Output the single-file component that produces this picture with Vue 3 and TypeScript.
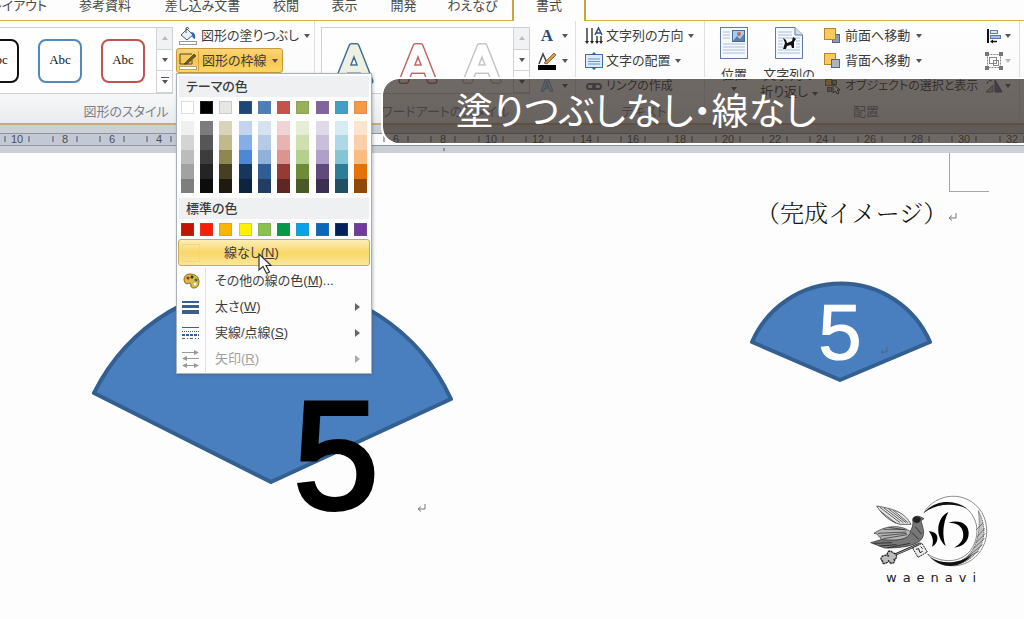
<script setup lang="ts">
interface Shade { base: string; ramp: string[] }

const tabs: string[] = ['レイアウト', '参考資料', '差し込み文書', '校閲', '表示', '開発', 'わえなび', '書式']
const shapeStyles: string[] = ['black', 'blue', 'red']
const artStyles: string[] = ['teal', 'rose', 'silver']

const theme: Shade[] = [
  { base: '#ffffff', ramp: ['#f0f0f0', '#d4d4d4', '#bcbcbc', '#a2a2a2', '#7e7e7e'] },
  { base: '#000000', ramp: ['#7c7c7c', '#565656', '#3c3c3c', '#242424', '#0c0c0c'] },
  { base: '#e6e7e1', ramp: ['#d9d3bb', '#bfb98b', '#8f8650', '#463f22', '#1e1a10'] },
  { base: '#1d4679', ramp: ['#c2d4f0', '#86aee6', '#4c88d6', '#14365f', '#0d2342'] },
  { base: '#4c7fb8', ramp: ['#d8e2ee', '#b5cbe5', '#90b2d8', '#315e92', '#223f63'] },
  { base: '#c5534a', ramp: ['#f1d3d6', '#e8b4b2', '#dc9490', '#973a34', '#5e2723'] },
  { base: '#96b156', ramp: ['#e6ecd6', '#d0dfb0', '#b5cf8c', '#6f8b38', '#4a5a26'] },
  { base: '#8064a2', ramp: ['#e0d9e8', '#cabfda', '#b09fc8', '#5f4a7d', '#3c3052'] },
  { base: '#439fc4', ramp: ['#d6ebf2', '#aed8e6', '#84c4d6', '#2b7d98', '#205063'] },
  { base: '#f79a45', ramp: ['#fde4cd', '#fbcfaa', '#f9bd82', '#e57206', '#8f4a0a'] },
]
const standard: string[] = ['#c01405', '#fb1d05', '#fdb409', '#fdf104', '#8cc152', '#089748', '#08a2ea', '#0a68bc', '#02205e', '#6f3c9e']

const rulerMarks = Array.from({ length: 26 }, (_, i) => {
  const n = (i - 6) * 2
  return { n: Math.abs(n), x: Math.round(254 + n * 23.68) }
})
</script>

<template>
  <div class="window">
    <nav class="tabs" aria-label="リボン">
      <a v-for="(t, i) in tabs" :key="t" href="#" class="tab" :class="{ first: i === 0, active: t === '書式' }">{{ t }}</a>
      <span class="tab-rest"></span>
    </nav>

    <div class="ribbon">
      <section class="group g-shape">
        <div class="body">
          <div class="gallery shapes">
            <div class="thumbs">
              <button v-for="s in shapeStyles" :key="s" type="button" class="abc" :class="s">Abc</button>
            </div>
            <div class="scroll">
              <button type="button" aria-label="上へ"><i class="caret up"></i></button>
              <button type="button" aria-label="下へ"><i class="caret"></i></button>
              <button type="button" aria-label="その他"><i class="caret more"></i></button>
            </div>
          </div>
          <div class="commands">
            <button type="button" class="cmd">
              <svg width="20" height="20" viewBox="0 0 20 20">
                <path d="M3 9 L9 3 L15 9 L9 14 Z" fill="#e9f0fa" stroke="#3b5f93" />
                <path d="M8 7 V2 Q10 0 11 3" fill="none" stroke="#555" />
                <path d="M13 6 Q18 6 17 13 Q14 12 14 9 Z" fill="#2f68b4" />
                <rect x="1.500" y="15.500" width="17" height="3" fill="#fff" stroke="#999" />
              </svg>
              <span>図形の塗りつぶし</span><i class="caret"></i>
            </button>
            <div class="split">
              <button type="button" class="cmd pressed" aria-expanded="true">
                <svg width="20" height="20" viewBox="0 0 20 20">
                  <path d="M14 3 H2 V13 H14 V9" fill="none" stroke="#4d4634" />
                  <path d="M7 12 L16 3 L18 5 L9 13 L6 13 Z" fill="#6d5a2b" stroke="#3d341b" stroke-width=".6" />
                  <rect x="1.500" y="15.500" width="17" height="3" fill="#fff" stroke="#b9a676" />
                </svg>
                <span>図形の枠線</span><i class="caret"></i>
              </button>

              <div class="menu">
                <h3>テーマの色</h3>
                <div class="swatches">
                  <button v-for="c in theme" :key="c.base" type="button" class="sw" :aria-label="c.base" :style="{ background: c.base }"></button>
                </div>
                <div class="ramps">
                  <div v-for="c in theme" :key="c.base" class="ramp">
                    <button v-for="r in c.ramp" :key="r" type="button" :aria-label="r" :style="{ background: r }"></button>
                  </div>
                </div>
                <h3>標準の色</h3>
                <div class="swatches std">
                  <button v-for="c in standard" :key="c" type="button" class="sw" :aria-label="c" :style="{ background: c }"></button>
                </div>
                <button type="button" class="none"><i class="nobox"></i><span>線なし(<u>N</u>)</span></button>
                <div class="items">
                  <button type="button" class="item">
                    <svg width="20" height="20" viewBox="0 0 20 20">
                      <path d="M3 9 Q3 3 9 3 Q17 3 18 10 Q18 17 13 17 Q9 17 10 13 Q8 11 6 13 Q3 12 3 9 Z" fill="#d9b84a" stroke="#8a6b1c" />
                      <circle cx="7" cy="7" r="1.500" fill="#a03020" /><circle cx="11" cy="6" r="1.500" fill="#333" />
                      <circle cx="15" cy="9" r="1.500" fill="#33742a" /><circle cx="14" cy="13" r="1.500" fill="#fff" />
                    </svg>
                    <span>その他の線の色(<u>M</u>)...</span>
                  </button>
                  <button type="button" class="item">
                    <svg width="20" height="20" viewBox="0 0 20 20">
                      <path d="M1 5 H18" stroke="#3d5f8c" stroke-width="2" /><path d="M1 9.500 H18" stroke="#3d5f8c" stroke-width="3" /><path d="M1 15 H18" stroke="#3d5f8c" stroke-width="4" />
                    </svg>
                    <span>太さ(<u>W</u>)</span><i class="arrow"></i>
                  </button>
                  <button type="button" class="item">
                    <svg width="20" height="20" viewBox="0 0 20 20" stroke="#3d5f8c">
                      <path d="M1 4.500 H18" /><path d="M1 8.500 H18" stroke-dasharray="1 1" /><path d="M1 12 H18" stroke-width="2" stroke-dasharray="3 1" /><path d="M1 15.500 H18" stroke-dasharray="3 2 1 2" />
                    </svg>
                    <span>実線/点線(<u>S</u>)</span><i class="arrow"></i>
                  </button>
                  <button type="button" class="item" disabled>
                    <svg width="20" height="20" viewBox="0 0 20 20" stroke="#999" fill="#999">
                      <path d="M1 3.500 H15" /><path d="M13 1 L18 3.500 L13 6 Z" stroke="none" />
                      <path d="M4 9.500 H18" /><path d="M6 7 L1 9.500 L6 12 Z" stroke="none" />
                      <path d="M4 16.500 H15" /><path d="M13 14 L18 16.500 L13 19 Z M6 14 L1 16.500 L6 19 Z" stroke="none" />
                    </svg>
                    <span>矢印(<u>R</u>)</span><i class="arrow"></i>
                  </button>
                </div>
                <svg class="pointer" width="16" height="22" viewBox="0 0 16 22">
                  <path d="M1 1 V17 L5 13.500 L8.500 20.500 L11.500 19 L8 12.500 H13 Z" fill="#fff" stroke="#333" stroke-width="1.200" />
                </svg>
              </div>
            </div>
          </div>
        </div>
        <h2>図形のスタイル</h2>
      </section>

      <section class="group g-art">
        <div class="body">
          <div class="gallery arts">
            <div class="thumbs">
              <button v-for="s in artStyles" :key="s" type="button" class="art" :class="s" aria-label="ワードアート">
                <svg width="44" height="54" viewBox="0 0 44 54">
                  <text class="outer" x="22" y="47" text-anchor="middle">A</text>
                  <text class="inner" x="22" y="47" text-anchor="middle">A</text>
                </svg>
              </button>
            </div>
            <div class="scroll">
              <button type="button" aria-label="上へ"><i class="caret up"></i></button>
              <button type="button" aria-label="下へ"><i class="caret"></i></button>
              <button type="button" aria-label="その他"><i class="caret more"></i></button>
            </div>
          </div>
          <div class="commands">
            <button type="button" class="cmd"><b class="serif-a">A</b><i class="caret"></i></button>
            <button type="button" class="cmd">
              <svg width="20" height="20" viewBox="0 0 20 20">
                <path d="M2 13 L6 3 L10 12" fill="none" stroke="#444" stroke-width="1.500" />
                <path d="M7 12 L17 2 L19 4 L10 13 Z" fill="#d79a4c" stroke="#6f4a1c" stroke-width=".7" />
                <rect x="1" y="14" width="18" height="5" fill="#000" />
              </svg><i class="caret"></i>
            </button>
            <button type="button" class="cmd"><b class="glow-a">A</b><i class="caret"></i></button>
          </div>
        </div>
        <h2>ワードアートのスタイル</h2>
      </section>

      <section class="group g-text">
        <div class="commands">
          <button type="button" class="cmd">
            <svg width="20" height="20" viewBox="0 0 20 20">
              <path d="M3 2 V16 M8 2 V16 M13 10 V16 M17 10 V16" stroke="#222" stroke-width="1.300" />
              <path d="M1 15 H5 L3 18 Z M6 15 H10 L8 18 Z M11 15 H15 L13 18 Z M15 15 H19 L17 18 Z" fill="#222" />
              <path d="M11 9 L14.500 2 L18 9 M12.500 7 H17" fill="none" stroke="#2c4a85" stroke-width="1.500" />
            </svg>
            <span>文字列の方向</span><i class="caret"></i>
          </button>
          <button type="button" class="cmd">
            <svg width="20" height="20" viewBox="0 0 20 20">
              <rect x="1.500" y="3.500" width="17" height="13" fill="#dceafa" stroke="#3f6ea8" />
              <path d="M4 8 H16 M4 10.500 H16 M4 13 H16" stroke="#6d96c8" />
              <path d="M7 4 L10 1 L13 4 Z M7 16 L10 19 L13 16 Z" fill="#2d65a5" />
            </svg>
            <span>文字の配置</span><i class="caret"></i>
          </button>
          <button type="button" class="cmd compact">
            <svg width="20" height="20" viewBox="0 0 20 20" fill="none" stroke="#666a8a" stroke-width="2">
              <rect x="3" y="8" width="8" height="5" rx="2.500" /><rect x="9" y="8" width="8" height="5" rx="2.500" />
            </svg>
            <span>リンクの作成</span>
          </button>
        </div>
        <h2>テキスト</h2>
      </section>

      <section class="group g-arrange">
        <div class="body">
          <button type="button" class="big">
            <svg width="30" height="34" viewBox="0 0 30 34">
              <rect x="1.500" y="1.500" width="27" height="31" fill="#f5f9fe" stroke="#5d7ba3" />
              <path d="M4 6 H11 M4 9 H11 M4 12 H11 M4 18 H26 M4 21 H26 M4 24 H26 M4 27 H26" stroke="#a9bfdb" />
              <rect x="13.500" y="4.500" width="12" height="11" fill="#a9cbed" stroke="#4c6b97" />
              <path d="M14 15 L18 10 L21 13 L25 8 V15 Z" fill="#5a7fa8" /><circle cx="20" cy="8" r="2" fill="#c66a4e" />
            </svg>
            <span>位置</span><i class="caret"></i>
          </button>
          <button type="button" class="big wrap">
            <svg width="30" height="34" viewBox="0 0 30 34">
              <path d="M1.500 1.500 H21 L28.500 9 V32.500 H1.500 Z" fill="#f5f9fe" stroke="#5d7ba3" />
              <path d="M21 1.500 V9 H28.500" fill="#cfe0f3" stroke="#5d7ba3" />
              <path d="M4 6 H18 M4 9 H18 M4 12 H26 M4 15 H9 M22 15 H26 M4 18 H9 M22 18 H26 M4 21 H9 M22 21 H26 M4 24 H26 M4 27 H26" stroke="#a9bfdb" />
              <path d="M9 12 L12 14 L13 17 L18 15 L19 11 L22 13 L20 16 L20 22 H18 L17 19 L13 20 L12 23 H9 L11 17 Z" fill="#111" />
            </svg>
            <span>文字列の</span><span>折り返し <i class="caret"></i></span>
          </button>
          <div class="commands">
            <button type="button" class="cmd">
              <svg width="20" height="20" viewBox="0 0 20 20">
                <rect x="9.500" y="8.500" width="7" height="8" fill="#8d9db2" stroke="#55657c" /><rect x="1.500" y="2.500" width="11" height="11" fill="#fbc85c" stroke="#b98428" />
              </svg>
              <span>前面へ移動</span><i class="caret"></i>
            </button>
            <button type="button" class="cmd">
              <svg width="20" height="20" viewBox="0 0 20 20">
                <rect x="1.500" y="2.500" width="11" height="11" fill="#fbc85c" stroke="#b98428" /><rect x="8.500" y="8.500" width="8" height="8" fill="#a9b5c6" stroke="#55657c" />
              </svg>
              <span>背面へ移動</span><i class="caret"></i>
            </button>
            <button type="button" class="cmd compact">
              <svg width="20" height="20" viewBox="0 0 20 20">
                <rect x="2.500" y="3.500" width="6" height="6" fill="#fbc85c" stroke="#8a6a34" /><rect x="9.500" y="4.500" width="4" height="4" fill="#aaa" stroke="#666" /><rect x="4.500" y="11.500" width="4" height="4" fill="#aaa" stroke="#666" />
                <path d="M10 8 V17 L12.500 15 L14 18 L16 17 L14.500 14 H17 Z" fill="#fff" stroke="#333" />
              </svg>
              <span>オブジェクトの選択と表示</span>
            </button>
          </div>
          <div class="commands right">
            <button type="button" class="cmd" aria-label="配置">
              <svg width="20" height="20" viewBox="0 0 20 20">
                <path d="M4 3 V17" stroke="#111" stroke-width="2" /><rect x="6.500" y="4.500" width="7" height="3" fill="#dbe7f5" stroke="#5d7ba3" /><rect x="6.500" y="9.500" width="10" height="3" fill="#a8c0de" stroke="#5d7ba3" />
                <path d="M13 15.500 H8" stroke="#111" stroke-width="1.500" /><path d="M9 13.500 L6 15.500 L9 17.500 Z" fill="#111" />
              </svg><i class="caret"></i>
            </button>
            <button type="button" class="cmd" aria-label="グループ化" disabled>
              <svg width="20" height="20" viewBox="0 0 20 20" fill="none" stroke="#888">
                <rect x="3.500" y="3.500" width="13" height="13" stroke-dasharray="2 1" /><rect x="5.500" y="6.500" width="7" height="6" /><rect x="9.500" y="9.500" width="5" height="5" />
                <path d="M1 1 H5 V5 H1 Z M15 1 H19 V5 H15 Z M1 15 H5 V19 H1 Z M15 15 H19 V19 H15 Z" fill="#777" stroke="none" />
              </svg><i class="caret"></i>
            </button>
            <button type="button" class="cmd" aria-label="回転">
              <svg width="20" height="20" viewBox="0 0 20 20">
                <path d="M2 16 H9 V9 Z" fill="#b4b4c0" stroke="#777" /><path d="M11 4 V16 H18 Z" fill="#7b6aa8" stroke="#5b4c86" /><path d="M3 8 Q4 3 8 5" fill="none" stroke="#555" />
              </svg><i class="caret"></i>
            </button>
          </div>
        </div>
        <h2>配置</h2>
      </section>
    </div>

    <div class="ruler">
      <svg width="1240" height="28" viewBox="0 0 1240 28">
        <rect x="0" y="8" width="254" height="12" fill="#c2c8d6" />
        <rect x="254" y="8" width="986" height="12" fill="#fbfbfc" />
        <path d="M0 8.500 H1240" stroke="#8e949e" /><path d="M0 20.500 H1240" stroke="#8e949e" />
        <g v-for="m in rulerMarks" :key="m.x">
          <text v-if="m.n" :x="m.x" y="18" text-anchor="middle">{{ m.n }}</text>
          <path :d="`M${m.x - 12} 11 V17 M${m.x + 12} 11 V17`" stroke="#555" />
        </g>
        <path d="M444 23 V26" stroke="#555" />
      </svg>
    </div>

    <main class="page">
      <svg class="return r1" width="9" height="9" viewBox="0 0 9 9"><path d="M8 0 V5 H2 M4 2.500 L1 5 L4 7.500" fill="none" stroke="#777" /></svg>
      <svg class="return r2" width="9" height="9" viewBox="0 0 9 9"><path d="M8 0 V5 H2 M4 2.500 L1 5 L4 7.500" fill="none" stroke="#777" /></svg>
      <i class="corner"></i>
      <p class="caption">（完成イメージ）</p>

      <svg class="fan large" width="380" height="250" viewBox="0 0 380 250">
        <path d="M14 120 A198 198 0 0 1 371 126 L191 209 Z" fill="#4a7fbf" stroke="#335f91" stroke-width="4" stroke-linejoin="round" />
        <text x="256" y="236" text-anchor="middle" font-size="154" stroke="#000" stroke-width="4">5</text>
      </svg>
      <svg class="fan small" width="190" height="110" viewBox="0 0 190 110">
        <path d="M7 64 A97 97 0 0 1 185 64 L95 102 Z" fill="#4a7fbf" stroke="#335f91" stroke-width="4" stroke-linejoin="round" />
        <text x="95" y="81" text-anchor="middle" font-size="78" fill="#fff" stroke="#fff" stroke-width="1">5</text>
        <path d="M142 69 V74 H136 M138 72 L136 74 L138 76" fill="none" stroke="#4d6583" />
      </svg>

      <div class="logo">
        <svg width="174" height="90" viewBox="0 0 522 270">
          <path d="M222 98 C255 40 350 25 396 98 C440 180 375 265 300 257 C265 253 245 240 233 222 C275 250 330 250 361 212 C397 160 378 110 352 88 C315 58 265 62 222 98 Z" fill="#fff" stroke="#555" stroke-width="2" />
          <path d="M385 92 C432 180 372 255 300 255 C345 248 400 205 385 92 Z" fill="#c4c4c4" stroke="#333" stroke-width="2" stroke-dasharray="4 2" />
          <path d="M240 230 C275 255 330 252 368 222 C334 266 278 270 240 230 Z M222 98 C255 60 310 56 352 86 C312 68 260 70 222 98 Z" fill="#111" />
          <path d="M398 130 L378 150 M404 145 L382 170 M406 160 L378 188 M404 175 L370 206 M398 194 L352 230 M386 214 L336 240" stroke="#444" stroke-width="2" />
          <path d="M295 96 C258 114 255 170 287 198 C276 166 278 130 295 96 Z" fill="#000" />
          <path d="M296 128 C330 118 356 132 356 160 C356 186 338 200 312 203 C336 190 344 174 338 153 C334 136 318 128 296 128 Z" fill="#000" />
          <path d="M236 154 C256 154 264 166 262 178 C260 190 254 196 246 200 C252 184 248 168 236 154 Z" fill="#000" />
          <g stroke="#222" stroke-width="2" stroke-linejoin="round">
            <path d="M183 133 C165 100 140 88 80 78 C96 104 118 124 150 133 Z" fill="#e4e4e4" />
            <path d="M90 82 L150 128 M102 84 L160 128 M116 87 L168 128 M130 91 L174 128 M92 94 L138 130" fill="none" />
            <path d="M188 118 C190 108 207 106 214 112 L222 116 L213 122 C218 142 226 158 216 176 C196 202 140 204 104 204 L62 188 L96 178 C120 180 140 178 160 170 C182 160 192 140 188 118 Z" fill="#777" />
            <path d="M190 114 C196 108 208 110 212 116 L208 126 C200 130 194 128 190 122 Z" fill="#222" />
            <path d="M182 156 C160 136 112 132 72 160 C90 162 80 170 92 172 C86 182 120 180 138 180 C164 178 178 170 182 156 Z" fill="#b5b5b5" />
            <path d="M84 160 L168 156 M92 168 L170 160 M100 176 L172 164 M100 148 L164 148 M116 142 L170 150" fill="none" stroke-width="2" />
            <path d="M72 190 L126 188 M88 198 L140 194 M112 204 L180 190 M196 140 L214 162 M186 158 L206 178" fill="none" stroke="#111" />
            <path d="M130 226 L212 190" fill="none" stroke-width="7" />
            <path d="M132 226 L210 191" fill="none" stroke="#ddd" />
            <path d="M188 204 L216 190 L232 216 L204 232 Z" fill="#eee" stroke-width="3" stroke-dasharray="6 2" />
            <path d="M198 208 L206 206 L210 218 L218 214 M212 200 L218 206" fill="none" stroke-width="3" />
            <path d="M128 218 C116 204 106 224 116 228 C98 220 86 236 98 244 C94 254 112 252 116 242 C122 258 140 246 132 238 C144 236 142 222 128 218 Z" fill="#bbb" stroke-width="4" stroke-dasharray="7 2" />
          </g>
        </svg>
        <span>waenavi</span>
      </div>
    </main>

    <div class="banner"><p>塗りつぶしなし・線なし</p></div>
  </div>
</template>

<style>
html, body { margin: 0; }
</style>

<style scoped>
.window {
  position: relative;
  display: flex;
  flex-direction: column;
  min-height: 100vh;
  overflow: hidden;
  background: #fdfdfd;
  color: #3c3c3c;
  font: 13px/20px "Liberation Sans", "Noto Sans CJK JP", sans-serif;
  font-feature-settings: "palt";
}
button {
  margin: 0;
  padding: 0;
  border: 0;
  background: none;
  color: inherit;
  font: inherit;
  font-feature-settings: inherit;
  white-space: nowrap;
}
svg { display: block; flex: none; }
h2, h3, p { margin: 0; }

.tabs {
  display: grid;
  grid-template-columns: 62px 86px 109px 58px 59px 59px 79px 74px 1fr;
  height: 21px;
  line-height: 12px;
}
.tab, .tab-rest { border-bottom: 1px solid #d2b04c; }
.tab {
  display: flex;
  justify-content: center;
  color: #4a4a4a;
  text-decoration: none;
  white-space: nowrap;
}
.tab.first { justify-content: flex-end; padding-right: 15px; }
.tab.active {
  border: solid #cda33b;
  border-width: 0 2px;
  background: #fdfdfd;
}

.ribbon {
  display: flex;
  height: 102px;
  border-bottom: 2px solid #c9ab7a;
  background: linear-gradient(#fefefe 0%, #fbfbfb 65%, #e9ebee 100%);
}
.group {
  display: flex;
  flex-direction: column;
  box-sizing: border-box;
  border-right: 1px solid #dcdee1;
}
.g-shape { width: 315px; }
.g-art { width: 261px; }
.g-text { width: 129px; padding-left: 8px; }
.g-arrange { width: 315px; padding-left: 8px; }
.body { display: flex; height: 80px; }
.group h2 {
  color: #7b8089;
  font-size: 13px;
  font-weight: 400;
  line-height: 22px;
  text-align: center;
  white-space: nowrap;
}
.g-shape h2 { padding-right: 62px; }
.commands { display: flex; flex-direction: column; padding-top: 2px; height: 78px; }
.cmd { display: flex; align-items: center; gap: 3px; height: 25px; padding-left: 2px; }
.cmd .caret { margin-left: 2px; }
.cmd:disabled .caret { opacity: .4; }
.cmd.compact { font-size: 12px; }
.g-text .cmd { gap: 2px; padding-left: 0; }

.caret {
  display: inline-block;
  flex: none;
  width: 0;
  height: 0;
  border: 3px solid transparent;
  border-top: 4px solid #555;
  border-bottom: 0;
}
.caret.up { border-top: 0; border-bottom: 4px solid #bbb; }
.caret.more { position: relative; }
.caret.more::before { content: ""; position: absolute; left: -4px; top: -7px; width: 8px; height: 1px; background: #555; }

.gallery {
  display: flex;
  box-sizing: border-box;
  height: 67px;
  margin-top: 6px;
  border: 1px solid #cdd0d4;
  background: #fefefe;
}
.shapes { width: 173px; border-left: 0; margin-right: 3px; }
.arts { width: 209px; margin-left: 6px; margin-right: 5px; }
.thumbs { display: flex; flex: 1; min-width: 0; align-items: center; justify-content: flex-end; overflow: hidden; }
.shapes .thumbs { gap: 19px; padding-right: 11px; }
.arts .thumbs { gap: 20px; padding-right: 9px; }
.scroll { display: grid; grid-template-rows: repeat(3, 1fr); width: 16px; }
.scroll button { display: flex; align-items: center; justify-content: center; border: solid #d0d3d7; border-width: 0 0 1px 1px; }
.scroll button:first-child { background: #f1f2f4; }
.abc {
  box-sizing: border-box;
  flex: none;
  width: 44px;
  height: 44px;
  padding-bottom: 2px;
  border: 2px solid #111;
  border-radius: 8px;
  background: #fff;
  color: #111;
  font: 13px/16px "Liberation Serif", serif;
}
.abc.blue { border-color: #5287c0; }
.abc.red { border-color: #bd544f; }
.art { flex: none; }
.art text { font: 50px "Liberation Sans", sans-serif; stroke-linejoin: round; }
.outer { stroke-width: 6px; }
.inner { fill: #fff; stroke: #fff; stroke-width: 3px; }
.teal .outer { stroke: #3d6f95; }
.teal .inner { fill: #eef0e2; stroke: #eef0e2; }
.rose .outer { stroke: #bf6664; }
.silver .outer { stroke: #c4c4c4; }
.serif-a { width: 20px; color: #274a80; font: bold 17px/20px "Liberation Serif", serif; text-align: center; }
.glow-a { width: 20px; color: #eef7ff; font: bold 17px/20px "Liberation Sans", sans-serif; text-align: center; -webkit-text-stroke: 1px #6ba6d6; }

.big { display: flex; flex-direction: column; align-items: center; width: 42px; padding-top: 5px; line-height: 17px; }
.big svg { margin-bottom: 6px; }
.big.wrap { width: 68px; }
.big > .caret { margin-top: 4px; }
.g-arrange .commands { flex: none; width: 161px; }
.g-arrange .commands .cmd { padding-left: 0; gap: 2px; }
.g-arrange .commands .cmd .caret { margin-left: 4px; }
.g-arrange .commands.right { width: 28px; }
.g-arrange .commands.right .cmd { gap: 0; }
.g-arrange .commands.right .caret { margin-left: 1px; }

.split { position: relative; }
.pressed {
  box-sizing: border-box;
  padding: 0 4px 0 1px;
  border: 1px solid #c7993a;
  border-radius: 3px;
  background: linear-gradient(#fbd477, #f8c650 50%, #fcd866);
}
.pressed svg { border-right: 1px solid #d9a440; }
.menu {
  position: absolute;
  top: 25px;
  left: 0;
  z-index: 5;
  box-sizing: border-box;
  width: 196px;
  padding: 2px 1px 1px;
  border: 1px solid #a9b0b8;
  background: #fdfdfd;
  box-shadow: 1px 1px 3px rgba(60, 70, 90, .35);
}
.menu h3 {
  margin: 0 1px;
  padding-left: 7px;
  background: #eef0f2;
  font-size: 13px;
  font-weight: 500;
  line-height: 21px;
}
.swatches { display: flex; justify-content: space-between; padding: 4px 3px 7px; }
.swatches.std { padding-bottom: 3px; }
.sw { box-sizing: border-box; width: 13px; height: 13px; border: 1px solid rgba(120, 120, 120, .25); }
.ramps { display: flex; justify-content: space-between; padding: 0 3px 5px; }
.ramp { display: grid; grid-template-rows: repeat(5, 1fr); width: 13px; height: 72px; }
.none {
  display: flex;
  align-items: center;
  box-sizing: border-box;
  width: 100%;
  height: 27px;
  border: 1px solid #d3a94b;
  border-radius: 3px;
  background: linear-gradient(#fdeeb9, #f8d768 50%, #fbe698);
  margin-bottom: 2px;
}
.none span { margin-left: 24px; }
.nobox { width: 16px; height: 16px; margin-left: 3px; border: 1px solid #f0d58a; }
.items { background: linear-gradient(90deg, transparent 27px, #dfe2e6 27px, #dfe2e6 28px, transparent 28px); }
.item { display: flex; align-items: center; width: 100%; height: 26px; padding-left: 3px; }
.item span { flex: 1; padding-left: 14px; text-align: left; }
.item:disabled { color: #a0a0a0; }
.arrow { border: 4px solid transparent; border-left: 5px solid #666; border-right: 0; margin-right: 10px; }
.item:disabled .arrow { border-left-color: #aaa; }
.pointer { position: absolute; left: 81px; top: 179px; }

.ruler { height: 28px; overflow: hidden; background: #cbd0d6; }
.ruler text { fill: #4e4e4e; font: 11px "Liberation Sans", sans-serif; }

.page { position: relative; flex: 1; min-height: 466px; background: #fdfdfd; }
.return { position: absolute; }
.r1 { left: 417px; top: 351px; }
.r2 { left: 948px; top: 60px; }
.corner { position: absolute; left: 949px; top: 0; width: 39px; height: 38px; border: solid #a5a5a5; border-width: 0 0 1px 1px; }
.caption {
  position: absolute;
  left: 756px;
  top: 43px;
  color: #111;
  font: 24px/32px "Noto Serif CJK JP", "Noto Sans CJK JP", serif;
  font-weight: 300;
  font-feature-settings: normal;
}
.fan { position: absolute; font-family: "Liberation Sans", sans-serif; }
.large { left: 80px; top: 120px; }
.small { left: 745px; top: 125px; }
.logo { position: absolute; left: 850px; top: 327px; width: 174px; }
.logo span { display: block; padding-left: 36px; color: #222; font: 13px/16px "DejaVu Sans", sans-serif; letter-spacing: 6px; }

.banner {
  position: absolute;
  z-index: 10;
  left: 381px;
  right: -20px;
  top: 77px;
  box-sizing: border-box;
  height: 68px;
  padding-left: 73px;
  border: 2px solid #fff;
  border-radius: 18px;
  background: rgba(50, 42, 36, .7);
  background-clip: padding-box;
}
.banner p { color: #fff; font-size: 37px; line-height: 68px; white-space: nowrap; }
</style>
